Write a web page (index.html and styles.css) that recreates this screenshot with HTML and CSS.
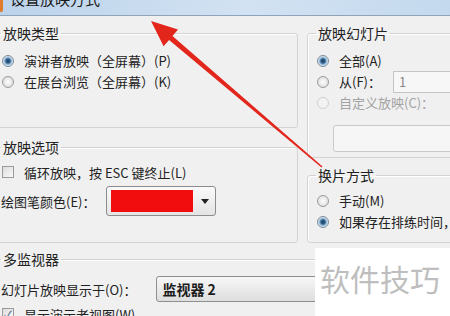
FILE: index.html
```html
<!DOCTYPE html>
<html lang="zh-CN">
<head>
  <meta charset="UTF-8">
  <title>设置放映方式</title>
  <link rel="stylesheet" href="styles.css">
</head>
<body>

  <div class="titlebar">
    <span class="app-icon"></span>
    <span class="title">设置放映方式</span>
  </div>

  <div class="dialog">
    <div class="columns">
      <div class="col col-left">
        <fieldset class="group g-type">
          <legend>放映类型</legend>
          <div class="opt"><span class="radio on"></span>演讲者放映（全屏幕）(P)</div>
          <div class="opt"><span class="radio"></span>在展台浏览（全屏幕）(K)</div>
        </fieldset>
        <fieldset class="group g-options">
          <legend>放映选项</legend>
          <div class="opt opt-check"><span class="check"></span>循环放映，按 ESC 键终止(L)</div>
          <div class="opt opt-color">
            绘图笔颜色(E)：
            <span class="color-pick"><span class="swatch"></span><span class="caret"></span></span>
          </div>
        </fieldset>
      </div>

      <div class="col col-right">
        <fieldset class="group g-slides">
          <legend>放映幻灯片</legend>
          <div class="opt"><span class="radio on"></span>全部(A)</div>
          <div class="opt"><span class="radio"></span>从(F)：<span class="spin">1<span class="spin-btn"></span></span></div>
          <div class="opt disabled"><span class="radio"></span>自定义放映(C)：</div>
          <div class="combo-empty"></div>
        </fieldset>
        <fieldset class="group g-advance">
          <legend>换片方式</legend>
          <div class="opt"><span class="radio"></span>手动(M)</div>
          <div class="opt"><span class="radio on"></span>如果存在排练时间，则使用它(U)</div>
        </fieldset>
      </div>
    </div>

    <fieldset class="group g-monitor">
      <legend>多监视器</legend>
      <div class="opt opt-monitor">
        幻灯片放映显示于(O)：
        <span class="select">监视器 2</span>
      </div>
      <div class="opt opt-check"><span class="check on">✓</span>显示演示者视图(W)</div>
    </fieldset>
  </div>

  <div class="watermark">软件技巧</div>

  <svg class="arrow" width="450" height="316" viewBox="0 0 450 316">
    <polygon points="151,21 178,29.5 172.5,35.9 322.5,166.4 321.5,167.6 169.1,39.9 163.6,46.3" fill="#e3261c"/>
  </svg>

</body>
</html>
```

FILE: styles.css
```css
html {
  overflow: hidden;
}
body {
  margin: 0;
  width: 450px;
  height: 316px;
  overflow: hidden;
  position: relative;
  background-color: #f0f0f0;
  font-family: "Noto Sans CJK SC", "Noto Sans", sans-serif;
  font-size: 13px;
  color: #222;
}

.titlebar {
  height: 15px;
  display: flex;
  overflow: hidden;
  border-bottom: 1px solid #8ea4bb;
  background: linear-gradient(to right, #bcd3eb, #d2e2f2 55%, #c4d9ee);
}
.app-icon {
  flex: none;
  width: 13px;
  height: 14px;
  margin-left: -10px;
  margin-top: -2px;
  border-radius: 2px;
  background-color: #e07a2c;
}
.title {
  margin-left: 7px;
  margin-top: -9px;
  font-size: 15px;
  line-height: 16px;
  color: #1a1a1a;
}

.dialog {
  margin-left: -8px;
  width: 500px;
}
.columns {
  display: flex;
  gap: 9px;
  margin-top: 8px;
}
.col {
  display: flex;
  flex-direction: column;
}
.col-left {
  flex: none;
  width: 306px;
}
.col-right {
  flex: none;
  width: 180px;
}

.group {
  width: 100%;
  margin: 0;
  padding: 8px 8px 0;
  min-width: 0;
  box-sizing: border-box;
  border: 1px solid #d3d3d3;
  border-radius: 3px;
  box-shadow: inset 1px 1px 0 #fff;
}
.group legend {
  padding: 0 2px;
  font-size: 14px;
  line-height: 18px;
  color: #222;
}
.g-type {
  height: 104px;
}
.g-options {
  height: 105px;
  margin-top: 10px;
  padding-top: 6px;
}
.g-slides {
  height: 134px;
}
.g-advance {
  height: 77px;
  margin-top: 8px;
  padding-top: 6px;
}
.g-monitor {
  height: 90px;
  margin-top: 7px;
}

.opt {
  display: flex;
  align-items: center;
  height: 21px;
  white-space: nowrap;
}
.opt-check {
  height: 20px;
}
.disabled {
  color: #a3a3a3;
}

.radio {
  flex: none;
  width: 12px;
  height: 12px;
  margin: 0 10px 0 1px;
  box-sizing: border-box;
  border: 1px solid #9a9a9a;
  border-radius: 50%;
  background: radial-gradient(circle, #fdfdfd, #d6d6d6);
}
.radio.on {
  border-color: #7d8a96;
  background: radial-gradient(circle, #1d3b58 0, #2f5f8a 2px, #8fb6d8 3.5px, #e6eef6 5px);
}
.disabled .radio {
  border-color: #cfcfcf;
  background: #f3f3f3;
}

.check {
  flex: none;
  width: 12px;
  height: 12px;
  margin: 0 10px 0 1px;
  box-sizing: border-box;
  border: 1px solid #9a9a9a;
  background: linear-gradient(135deg, #dcdcdc, #fafafa);
  font-size: 11px;
  line-height: 10px;
  text-align: center;
  color: #2c4a6e;
}

.opt-color {
  height: 30px;
  margin-top: 4px;
}
.color-pick {
  display: flex;
  align-items: center;
  flex: none;
  width: 110px;
  height: 30px;
  margin-left: 11px;
  box-sizing: border-box;
  padding: 3px 0 3px 4px;
  border: 1px solid #8c8c8c;
  border-radius: 3px;
  background: linear-gradient(#fafafa, #e4e4e4);
}
.swatch {
  width: 82px;
  height: 22px;
  background-color: #f10d0d;
}
.caret {
  margin-left: 8px;
  border-left: 4px solid transparent;
  border-right: 4px solid transparent;
  border-top: 5px solid #222;
}

.spin {
  flex: none;
  display: flex;
  width: 90px;
  height: 22px;
  margin-left: 12px;
  box-sizing: border-box;
  padding-left: 5px;
  border: 1px solid #c4c4c4;
  background-color: #f7f7f7;
  color: #8a8a8a;
  line-height: 20px;
}
.spin-btn {
  width: 14px;
  margin-left: 48px;
  border-left: 1px solid #d0d0d0;
  background: linear-gradient(#f4f4f4, #e2e2e2);
}
.combo-empty {
  width: 160px;
  height: 25px;
  margin: 12px 0 0 17px;
  border: 1px solid #c9c9c9;
  border-radius: 3px;
  background-color: #f6f6f6;
}

.opt-monitor {
  height: 26px;
  margin-bottom: 2px;
}
.select {
  flex: none;
  width: 180px;
  height: 26px;
  margin-left: 20px;
  box-sizing: border-box;
  padding-left: 5px;
  border: 1px solid #8e8f8f;
  border-radius: 3px;
  background: linear-gradient(#f7f7f7, #dedede);
  font-size: 14px;
  font-weight: bold;
  line-height: 24px;
  color: #1c1c1c;
}

.watermark {
  position: absolute;
  left: 315px;
  top: 248px;
  width: 135px;
  height: 68px;
  box-sizing: border-box;
  padding: 14px 0 0 5px;
  background-color: #fff;
  font-size: 30px;
  line-height: 32px;
  color: #bebebe;
}

.arrow {
  position: absolute;
  left: 0;
  top: 0;
  pointer-events: none;
}
```
